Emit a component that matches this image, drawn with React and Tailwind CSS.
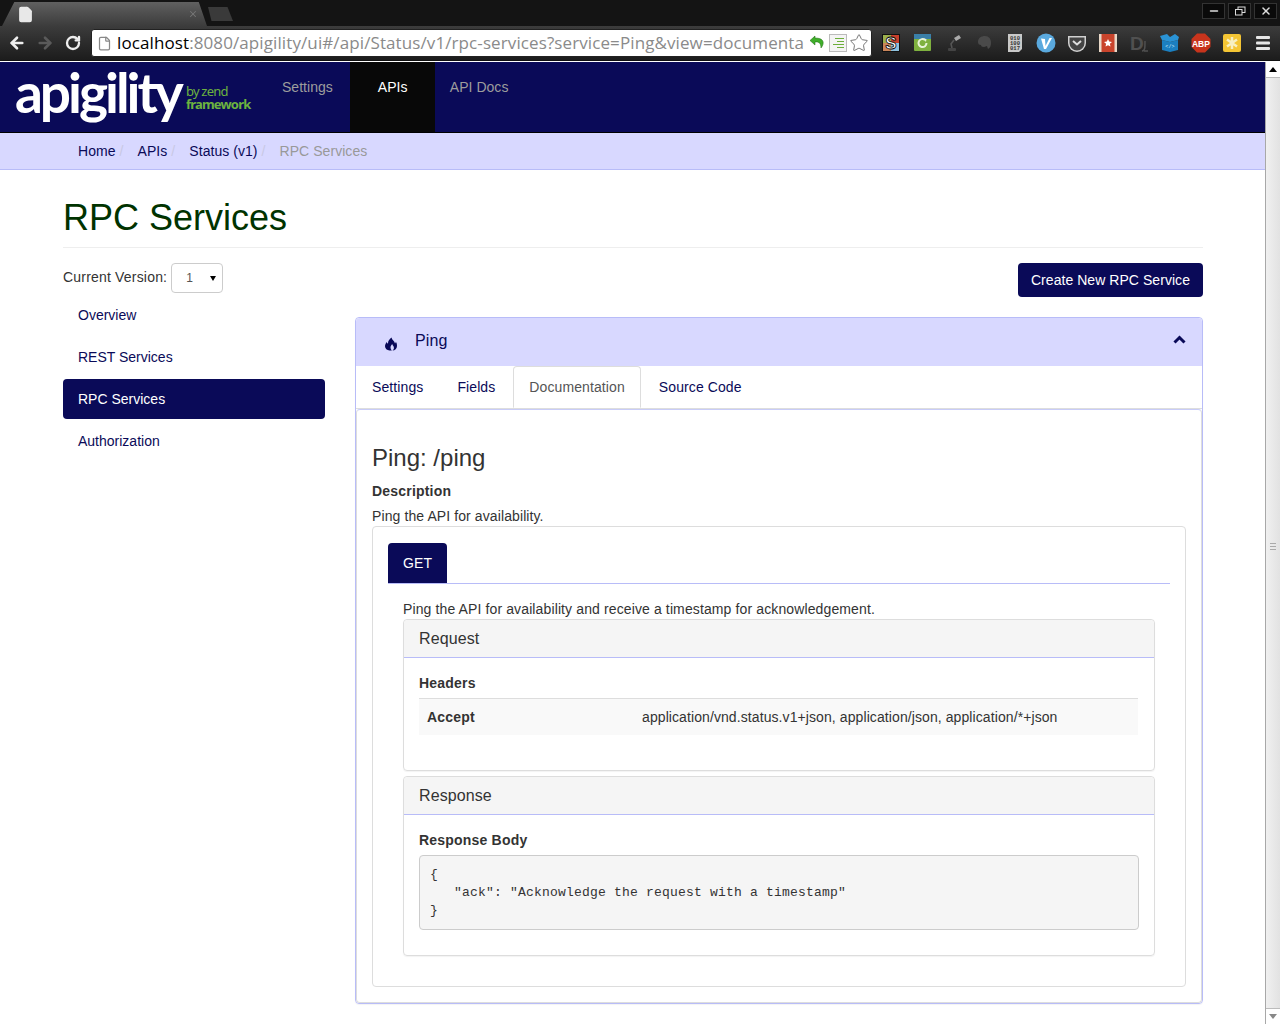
import { ArrowLeft, ArrowRight, RotateCw, X, Minus, Star, File } from "lucide-react";

const sans = "font-['Liberation_Sans',Arial,sans-serif]";

function ExtIcon({ children }) {
  return (
    <div className="w-[31px] h-[20px] flex items-center justify-center">
      <svg width="20" height="20" viewBox="0 0 20 20">
        {children}
      </svg>
    </div>
  );
}

function Extensions() {
  return (
    <div className="flex items-center ml-[3px]">
      <ExtIcon>
        <rect x="1" y="1" width="18" height="18" fill="#111" />
        <rect x="2" y="2" width="8" height="8" fill="#9bb04e" />
        <rect x="10" y="2" width="8" height="8" fill="#c8402c" />
        <rect x="2" y="10" width="8" height="8" fill="#c9855a" />
        <rect x="10" y="10" width="8" height="8" fill="#8ec0dc" />
        <text x="10" y="16" textAnchor="middle" fontSize="17" fontWeight="700" fontFamily="Liberation Sans" fill="#fff" stroke="#000" strokeWidth="0.8">S</text>
      </ExtIcon>
      <ExtIcon>
        <rect x="2" y="1" width="17" height="17" rx="1" fill="#7fb13f" />
        <rect x="2" y="1" width="17" height="5" fill="#3a7fa8" />
        <path d="M14.5 10a4 4 0 1 1-1.4-3" fill="none" stroke="#e8f3d8" strokeWidth="2" />
        <path d="M11.5 5.5l3 .5-.6 3z" fill="#e8f3d8" />
      </ExtIcon>
      <ExtIcon>
        <path d="M11 5l5-3 2 3-5 3z" fill="#aaa" />
        <path d="M11 7l-3 4 1 4" fill="none" stroke="#555" strokeWidth="1.6" />
        <rect x="5" y="15" width="8" height="3" rx="1" fill="#444" />
      </ExtIcon>
      <ExtIcon>
        <path d="M4 9c0-4 3-6 7-6s6 3 6 7c0 3-1 5-3 6l-1-3-3 1c-2 0-3-1-3-2-2 0-3-1-3-3z" fill="#4a4a4a" />
      </ExtIcon>
      <ExtIcon>
        <path d="M3 1h14v15l-3 3H3z" fill="#c9c9c9" />
        <text x="10" y="7" textAnchor="middle" fontSize="5.5" fontWeight="700" fontFamily="Liberation Mono" fill="#333">010</text>
        <text x="10" y="12" textAnchor="middle" fontSize="5.5" fontWeight="700" fontFamily="Liberation Mono" fill="#333">100</text>
        <text x="10" y="17" textAnchor="middle" fontSize="5.5" fontWeight="700" fontFamily="Liberation Mono" fill="#333">017</text>
      </ExtIcon>
      <ExtIcon>
        <circle cx="10" cy="10" r="9.5" fill="#5aa9de" />
        <path d="M5 5.5l4 .5.5 7 4-8 2.5 0-6 11h-2z" fill="#fff" />
      </ExtIcon>
      <ExtIcon>
        <path d="M1 3h18v7a9 9 0 0 1-18 0z" fill="#d0d0d0" />
        <path d="M2.5 4.5h15v5.5a7.500 7.500 0 0 1-15 0z" fill="#444" />
        <path d="M6 8l4 3.500L14 8" fill="none" stroke="#ddd" strokeWidth="2" />
      </ExtIcon>
      <ExtIcon>
        <rect x="1" y="1" width="18" height="18" rx="1" fill="#c9442c" />
        <rect x="1" y="1" width="2.500" height="18" fill="#e8d8c8" />
        <rect x="16.500" y="1" width="2.500" height="18" fill="#e8d8c8" />
        <path d="M10 6l1.200 2.600 2.800.3-2.100 1.900.6 2.800L10 12.200l-2.500 1.400.6-2.800L6 8.900l2.800-.3z" fill="#fff" />
      </ExtIcon>
      <ExtIcon>
        <text x="8" y="17" textAnchor="middle" fontSize="19" fontFamily="Liberation Sans" fontWeight="700" fill="#505050">D</text>
        <path d="M13 18c3 0 3-3 3-10M15 18h4" fill="none" stroke="#505050" strokeWidth="1.500" />
      </ExtIcon>
      <ExtIcon>
        <path d="M2 7l8 2 8-2v10l-8 2-8-2z" fill="#1b7fc0" />
        <path d="M2 7L0 3l7-2 3 3 5-3 4 3-1 3-8 2z" fill="#2a93d5" />
        <text x="10" y="15" textAnchor="middle" fontSize="5" fontFamily="Liberation Mono" fill="#d8eefb">{"</>"}</text>
      </ExtIcon>
      <ExtIcon>
        <path d="M6 .5h8L19.500 6v8L14 19.500H6L.5 14V6z" fill="#c8341c" />
        <text x="10" y="13.500" textAnchor="middle" fontSize="8.500" fontWeight="700" fontFamily="Liberation Sans" fill="#fff">ABP</text>
      </ExtIcon>
      <ExtIcon>
        <rect x="1" y="1" width="18" height="18" rx="2" fill="#f4c534" />
        <path d="M10 4v12M5 6.500l10 7M15 6.500l-10 7" stroke="#f7efc2" strokeWidth="2.500" />
      </ExtIcon>
      <ExtIcon>
        <rect x="3" y="3" width="14" height="3" rx="1" fill="#e6e6e6" />
        <rect x="3" y="8.500" width="14" height="3" rx="1" fill="#e6e6e6" />
        <rect x="3" y="14" width="14" height="3" rx="1" fill="#e6e6e6" />
      </ExtIcon>
    </div>
  );
}

function BrowserChrome() {
  return (
    <div className="h-[62px] shrink-0 flex flex-col bg-[#111]">
      {/* title bar with the tab */}
      <div className="h-[26px] flex items-end pl-[2px] bg-[#141414]">
        <div className="w-[205px] h-[24px] flex items-center justify-between pl-[15px] pr-[9px] bg-gradient-to-b from-[#606060] to-[#3c3c3c] [clip-path:polygon(0_100%,3%_50%,6%_0,96%_0,98%_50%,100%_100%)]">
          <File size={17} fill="#e8e8e8" stroke="#e8e8e8" />
          <X size={10} strokeWidth={2.5} className="text-[#777]" />
        </div>
        <div className="w-[25px] h-[14px] mb-[5px] ml-[1px] bg-[#3a3a3a] [clip-path:polygon(0_0,78%_0,100%_100%,14%_100%)]" />
        <div className="ml-auto flex gap-[3px] mb-[7px] pr-[3px]">
          <div className="w-[23px] h-[16px] flex items-center justify-center bg-[#0a0a0a] border border-[#333]">
            <Minus size={12} strokeWidth={3} className="text-[#ddd]" />
          </div>
          <div className="w-[23px] h-[16px] flex items-center justify-center bg-[#0a0a0a] border border-[#333]">
            <svg width="12" height="10" viewBox="0 0 12 10">
              <rect x="4" y="1" width="7" height="5.500" fill="none" stroke="#ddd" />
              <rect x="1.500" y="3.500" width="6.500" height="5.500" fill="#0a0a0a" stroke="#ddd" />
            </svg>
          </div>
          <div className="w-[23px] h-[16px] flex items-center justify-center bg-[#0a0a0a] border border-[#333]">
            <X size={12} strokeWidth={3} className="text-[#ddd]" />
          </div>
        </div>
      </div>
      {/* toolbar */}
      <div className="h-[34px] flex items-center bg-gradient-to-b from-[#3c3c3c] to-[#1c1c1c] pl-[8px]">
        <ArrowLeft size={18} strokeWidth={3.5} className="text-[#eee] shrink-0" />
        <ArrowRight size={18} strokeWidth={3.5} className="text-[#5a5a5a] ml-[10px] shrink-0" />
        <RotateCw size={16} strokeWidth={3.5} className="text-[#eee] ml-[11px] shrink-0" />
        <div className="w-[781px] h-[28px] ml-[10px] shrink-0 flex items-center bg-white rounded-[3px] border border-[#222] pl-[5px] pr-[2px] overflow-hidden">
          <File size={15} className="text-[#888] shrink-0" />
          <span className="ml-[5px] w-[689px] shrink-0 overflow-hidden whitespace-nowrap font-['Open_Sans',sans-serif] text-[17px] tracking-[0.1px] text-[#8a8a8a]">
            <span className="text-black">localhost</span>:8080/apigility/ui#/api/Status/v1/rpc-services?service=Ping&view=documenta
          </span>
          <svg width="18" height="18" viewBox="0 0 18 18" className="ml-[3px] shrink-0">
            <path d="M6 2L1 6.500 6 11V8c3-.5 6 .5 6 6 4-5 3-10-6-10z" fill="#3fae2a" stroke="#1d6a10" strokeWidth="0.500" />
          </svg>
          <div className="ml-[2px] w-[18px] h-[18px] shrink-0 border border-[#bbb] bg-[#f4f4f4] flex flex-col items-end justify-center gap-[2px] pr-[2px]">
            <div className="w-[9px] h-[1px] bg-[#6cae3a]" />
            <div className="w-[7px] h-[1px] bg-[#6cae3a]" />
            <div className="w-[11px] h-[1px] bg-[#6cae3a]" />
            <div className="w-[7px] h-[1px] bg-[#6cae3a]" />
          </div>
          <Star size={20} strokeWidth={1.2} className="ml-[2px] text-[#777] shrink-0" />
        </div>
        <Extensions />
      </div>
      <div className="h-[1px] bg-white mt-auto" />
    </div>
  );
}

function Scrollbar() {
  return (
    <div className="w-[15px] shrink-0 flex flex-col bg-[#eee] border-l border-[#a8a8a8]">
      <div className="h-[16px] bg-white border-b border-[#bbb] flex items-center justify-center">
        <div className="w-0 h-0 border-x-[4px] border-x-transparent border-b-[5px] border-b-black" />
      </div>
      <div className="flex-1 flex items-center justify-center bg-gradient-to-r from-[#f0f0f0] to-[#e2e2e2]">
        <div className="flex flex-col gap-[2px] mt-[6px]">
          <div className="w-[6px] h-[1px] bg-[#aaa]" />
          <div className="w-[6px] h-[1px] bg-[#aaa]" />
          <div className="w-[6px] h-[1px] bg-[#aaa]" />
        </div>
      </div>
      <div className="h-[16px] bg-white border-t border-[#bbb] flex items-center justify-center">
        <div className="w-0 h-0 border-x-[4px] border-x-transparent border-t-[5px] border-t-[#888]" />
      </div>
    </div>
  );
}

function TopNav() {
  return (
    <div className="h-[71px] shrink-0 flex bg-[#0a0a58] border-b border-black tracking-[0.03px]">
      <div className="w-[267px] shrink-0 flex items-start pl-[15px]">
        <div className="w-[171px] shrink-0">
          <span className="font-['Lato',sans-serif] font-bold text-white text-[55px] leading-[60px] tracking-[-3.050px]">apigility</span>
        </div>
        <div className="flex flex-col mt-[23px] font-['Noto_Sans',sans-serif] text-[#6cb33f] text-[13px] leading-[13px] tracking-[-0.8px]">
          <span>by zend</span>
          <span className="font-bold">framework</span>
        </div>
      </div>
      <div className="px-[15px] pt-[15px] text-[#9d9d9d] leading-[20px]">Settings</div>
      <div className="w-[85px] ml-[2px] pl-[28px] pt-[15px] bg-[#080808] text-white leading-[20px]">APIs</div>
      <div className="px-[15px] pt-[15px] text-[#9d9d9d] leading-[20px]">API Docs</div>
    </div>
  );
}

function Breadcrumb() {
  const items = ["Home", "APIs", "Status (v1)"];
  return (
    <div className="h-[37px] shrink-0 flex items-center pl-[78px] bg-[#d8d8ff] border-b border-[#b8bcf8] tracking-[0.05px]">
      {items.map((item) => (
        <div key={item} className="flex">
          <span className="text-[#0a0a58]">{item}</span>
          <span className="w-[22px] pl-[4px] text-[#c8c8e4]">/</span>
        </div>
      ))}
      <span className="text-[#999]">RPC Services</span>
    </div>
  );
}

function Sidebar() {
  const links = ["Overview", "REST Services", "RPC Services", "Authorization"];
  return (
    <div className="w-[262px] shrink-0">
      <div className="flex items-center h-[30px]">
        <span className="pb-[2px] tracking-[0.19px]">Current Version:</span>
        <div className="ml-[4px] w-[52px] h-[30px] flex items-center justify-between pl-[14px] pr-[6px] border border-[#ccc] rounded-[4px] text-[#555] text-[12px]">
          <span>1</span>
          <div className="w-0 h-0 border-x-[3px] border-x-transparent border-t-[5px] border-t-black" />
        </div>
      </div>
      <div className="mt-[2px] flex flex-col gap-[2px] tracking-normal">
        {links.map((link) => (
          <div
            key={link}
            className={`h-[40px] flex items-center px-[15px] rounded-[4px] ${
              link === "RPC Services" ? "bg-[#0a0a58] text-white" : "text-[#0a0a58]"
            }`}
          >
            {link}
          </div>
        ))}
      </div>
    </div>
  );
}

function Tabs() {
  const tabs = ["Settings", "Fields", "Documentation", "Source Code"];
  return (
    <div className="h-[43px] flex border-b border-[#ddd] tracking-[0.1px]">
      {tabs.map((tab) => (
        <div
          key={tab}
          className={`h-[42px] flex items-center px-[15px] mr-[2px] border rounded-t-[4px] ${
            tab === "Documentation"
              ? "border-[#ddd] border-b-white bg-white text-[#555]"
              : "border-transparent text-[#0a0a58]"
          }`}
        >
          {tab}
        </div>
      ))}
    </div>
  );
}

function RequestPanel() {
  return (
    <div className="border border-[#ddd] rounded-[4px] shadow-[0_1px_1px_rgba(0,0,0,0.05)]">
      <div className="h-[38px] flex items-center px-[15px] bg-[#f5f5f5] border-b border-[#b8bcf8] text-[16px] rounded-t-[4px]">
        Request
      </div>
      <div className="px-[15px] pt-[15px] pb-[35px]">
        <div className="font-bold leading-[20px] tracking-[0.2px]">Headers</div>
        <div className="mt-[5px] mr-[1px] border-t border-[#ddd] bg-[#f9f9f9] flex leading-[20px] py-[8px] pl-[8px]">
          <span className="w-[215px] font-bold tracking-[0.2px]">Accept</span>
          <span className="tracking-[0.09px]">application/vnd.status.v1+json, application/json, application/*+json</span>
        </div>
      </div>
    </div>
  );
}

function ResponsePanel() {
  return (
    <div className="mt-[5px] border border-[#ddd] rounded-[4px] shadow-[0_1px_1px_rgba(0,0,0,0.05)]">
      <div className="h-[38px] flex items-center px-[15px] bg-[#f5f5f5] border-b border-[#b8bcf8] text-[16px] rounded-t-[4px]">
        Response
      </div>
      <div className="px-[15px] pt-[15px] pb-[25px]">
        <div className="font-bold leading-[20px] tracking-[0.2px]">Response Body</div>
        <pre className="mt-[5px] py-[9.500px] px-[10px] bg-[#f5f5f5] border border-[#ccc] rounded-[4px] font-['Liberation_Mono',monospace] text-[13px] leading-[18px] tracking-[0.2px] text-[#333]">
          {'{\n   "ack": "Acknowledge the request with a timestamp"\n}'}
        </pre>
      </div>
    </div>
  );
}

function PingPanel() {
  return (
    <div className="mt-[20px] border border-[#b8bcf8] rounded-[4px] shadow-[0_1px_1px_rgba(0,0,0,0.05)]">
      <div className="h-[48px] flex items-center bg-[#d8d8ff] pl-[29px] pr-[16px] rounded-t-[4px] text-[#0a0a58]">
        <svg width="13" height="14" viewBox="0 0 13 13" fill="currentColor" className="mt-[3px] shrink-0">
          <path d="M6.500 0c.5 2.500 3 3.500 3.500 6 .5-.3.8-1 .8-1.700 1 1.200 1.200 3 1.200 4.200 0 2.500-2 4.500-4.500 4.500 1.200-.8 1.800-2.200 1.200-3.800-.4-1-1.200-1.500-1.500-2.700-1 1.200-2 2.800-1.600 4.200.2.8.6 1.600 1.300 2.300H4.500C2 13 0 11 0 8.800 0 7 1 5.800 1.500 4.500c.4.8.8 1.300 1.500 1.700C2.800 3.500 4.500 1.500 6.500 0z" />
        </svg>
        <span className="ml-[17px] text-[16px] -mt-[2px]">Ping</span>
        <svg width="13" height="9" viewBox="0 0 13 9" className="ml-auto -mt-[6px] shrink-0">
          <path d="M1.500 7.500l5-5 5 5" fill="none" stroke="currentColor" strokeWidth="3" />
        </svg>
      </div>
      <Tabs />
      <div className="border border-[#ddd] border-t-[#c8ccf8] rounded-[4px] px-[15px] pt-[35px] pb-[15px]">
        <h3 className="text-[24px] leading-[26.400px] tracking-normal">Ping: /ping</h3>
        <div className="mt-[10px] font-bold leading-[20px] tracking-[0.2px]">Description</div>
        <div className="mt-[5px] leading-[20px]">Ping the API for availability.</div>
        <div className="border border-[#ddd] rounded-[4px] px-[15px] pt-[16px] pb-[30px]">
          <div className="border-b border-[#b8bcf8] flex">
            <div className="h-[40px] flex items-center px-[15px] bg-[#0a0a58] text-white rounded-t-[4px]">GET</div>
          </div>
          <div className="px-[15px] pt-[15px]">
            <div className="leading-[20px] tracking-[0.12px]">Ping the API for availability and receive a timestamp for acknowledgement.</div>
            <RequestPanel />
            <ResponsePanel />
          </div>
        </div>
      </div>
    </div>
  );
}

export default function App() {
  return (
    <div className={`w-[1280px] h-[1024px] overflow-hidden flex flex-col bg-white text-[14px] text-[#333] tracking-[0.1px] ${sans}`}>
      <BrowserChrome />
      <div className="flex-1 min-h-0 flex">
        <div className="flex-1 min-w-0">
          <TopNav />
          <Breadcrumb />
          <div className="w-[1140px] ml-[63px]">
            <h1 className="pt-[28px] pb-[9px] border-b border-[#eee] text-[36px] leading-[40px] tracking-normal text-[#003300]">RPC Services</h1>
            <div className="mt-[15px] flex">
              <Sidebar />
              <div className="ml-[30px] flex-1 flex flex-col">
                <div className="self-end h-[34px] flex items-center px-[13px] bg-[#0a0a58] text-white rounded-[4px] tracking-[0.05px]">
                  Create New RPC Service
                </div>
                <PingPanel />
              </div>
            </div>
          </div>
        </div>
        <Scrollbar />
      </div>
    </div>
  );
}
